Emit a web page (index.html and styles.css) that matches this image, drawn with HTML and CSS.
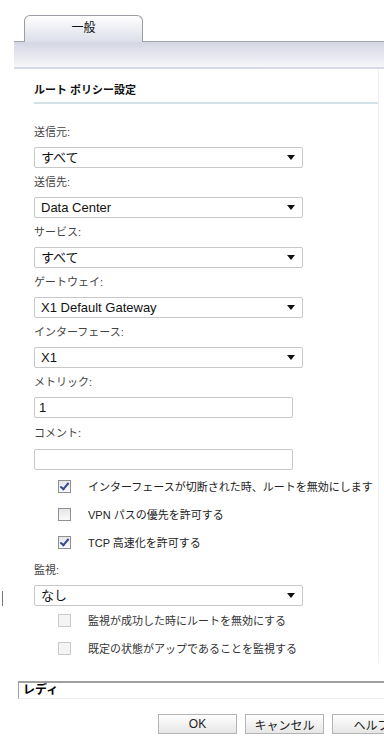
FILE: index.html
```html
<!DOCTYPE html>
<html lang="ja">

<head>
    <meta charset="UTF-8" />
    <meta name="viewport" content="width=device-width, initial-scale=1.0" />
    <title>ルート ポリシー設定</title>
    <link rel="stylesheet" href="styles.css">
</head>

<body>
    <div class="tabs">
        <div class="tab">一般</div>
    </div>
    <div class="tab-strip"></div>

    <div class="panel">
        <h2 class="section-title">ルート ポリシー設定</h2>

        <div class="form">
            <div class="label">送信元:</div>
            <div class="select"><span>すべて</span><i class="arrow"></i></div>

            <div class="label">送信先:</div>
            <div class="select latin"><span>Data Center</span><i class="arrow"></i></div>

            <div class="label">サービス:</div>
            <div class="select"><span>すべて</span><i class="arrow"></i></div>

            <div class="label">ゲートウェイ:</div>
            <div class="select latin"><span>X1 Default Gateway</span><i class="arrow"></i></div>

            <div class="label">インターフェース:</div>
            <div class="select latin"><span>X1</span><i class="arrow"></i></div>

            <div class="label">メトリック:</div>
            <div class="input latin">1</div>

            <div class="label tall">コメント:</div>
            <div class="input"></div>

            <div class="checks">
                <label class="check"><span class="box checked"></span>インターフェースが切断された時、ルートを無効にします</label>
                <label class="check"><span class="box"></span>VPN パスの優先を許可する</label>
                <label class="check"><span class="box checked"></span>TCP 高速化を許可する</label>
            </div>

            <div class="label">監視:</div>
            <div class="select"><span>なし</span><i class="arrow"></i></div>

            <div class="checks after-select">
                <label class="check disabled"><span class="box"></span>監視が成功した時にルートを無効にする</label>
                <label class="check disabled"><span class="box"></span>既定の状態がアップであることを監視する</label>
            </div>
        </div>
    </div>

    <div class="status">レディ</div>

    <div class="buttons">
        <button>OK</button>
        <button>キャンセル</button>
        <button>ヘルプ</button>
    </div>

    <div class="edge-mark"></div>
</body>

</html>
```

FILE: styles.css
```css
body,
html {
    margin: 0;
    padding: 0;
    background-color: #fff;
    font-family: "Liberation Sans", "Noto Sans CJK JP", sans-serif;
    font-size: 11px;
    color: #333;
}

body {
    position: relative;
    width: 384px;
    height: 744px;
    overflow: hidden;
}

.tabs {
    padding: 15px 0 0 24px;
    display: flex;
}

.tab {
    position: relative;
    z-index: 1;
    width: 117px;
    height: 26px;
    margin-bottom: -1px;
    border: 1px solid #9c9ca4;
    border-bottom: none;
    border-radius: 6px 6px 0 0;
    background: linear-gradient(#ffffff, #dcdeea);
    text-align: center;
    line-height: 24px;
    font-size: 12px;
    color: #111;
}

.tab-strip {
    margin-left: 14px;
    height: 25px;
    border-top: 1px solid #a4a4ac;
    border-bottom: 2px solid #d6d8e8;
    background: linear-gradient(#d4d6e4, #f6f6f9);
}

.panel {
    width: 344px;
    margin-left: 14px;
    padding: 12px 0 0 20px;
    border-right: 1px solid #f0f0f2;
}

.section-title {
    margin: 0;
    padding-bottom: 2px;
    border-bottom: 2px solid #d2e2e6;
    font-size: 11px;
    font-weight: bold;
    line-height: 19px;
    color: #111;
}

.form {
    padding-top: 14px;
}

.label {
    height: 29px;
    line-height: 29px;
    color: #444;
}

.label.tall {
    height: 31px;
    line-height: 31px;
}

.select,
.input {
    box-sizing: border-box;
    height: 21px;
    border: 1px solid #c8c8c8;
    border-radius: 2px;
    padding: 0 6px;
    line-height: 19px;
    font-size: 13px;
    color: #111;
}

.select {
    width: 269px;
    display: flex;
    align-items: center;
    justify-content: space-between;
}

.input {
    width: 259px;
    padding-left: 4px;
}

.latin {
    font-family: "Liberation Sans", Arial, sans-serif;
}

.arrow {
    width: 0;
    height: 0;
    margin-right: 1px;
    border-left: 4px solid transparent;
    border-right: 4px solid transparent;
    border-top: 5px solid #111;
}

.checks {
    padding: 2px 0 0 24px;
}

.checks.after-select {
    padding-top: 0;
}

.check {
    height: 28px;
    display: flex;
    align-items: center;
    white-space: nowrap;
    color: #222;
}

.box {
    box-sizing: border-box;
    flex: none;
    width: 13px;
    height: 13px;
    margin-right: 17px;
    border: 1px solid #8e8e96;
    background: linear-gradient(#e6e6ea, #fafafa);
    position: relative;
}

.box.checked::after {
    content: "";
    position: absolute;
    left: 3px;
    top: 0;
    width: 3px;
    height: 7px;
    border: solid #3a4690;
    border-width: 0 2px 2px 0;
    transform: rotate(40deg);
}

.check.disabled {
    color: #333;
}

.check.disabled .box {
    border-color: #cacaca;
    background: #f4f4f4;
}

.status {
    margin: 19px 0 0 18px;
    height: 15px;
    border-top: 2px solid #a0a0a0;
    border-left: 1px solid #a0a0a0;
    border-bottom: 1px solid #ececec;
    padding-left: 4px;
    line-height: 15px;
    font-size: 12px;
    font-weight: bold;
    color: #000;
}

.buttons {
    display: flex;
    gap: 8px;
    padding: 15px 0 0 158px;
}

.buttons button {
    flex: none;
    width: 79px;
    height: 20px;
    padding: 0;
    border: 1px solid #b4b4b4;
    background: linear-gradient(#ffffff, #e6e6e6);
    font-family: "Liberation Sans", "Noto Sans CJK JP", sans-serif;
    font-size: 12px;
    color: #222;
}

.edge-mark {
    position: absolute;
    left: 2px;
    top: 591px;
    width: 1px;
    height: 15px;
    background-color: #777;
}
```
